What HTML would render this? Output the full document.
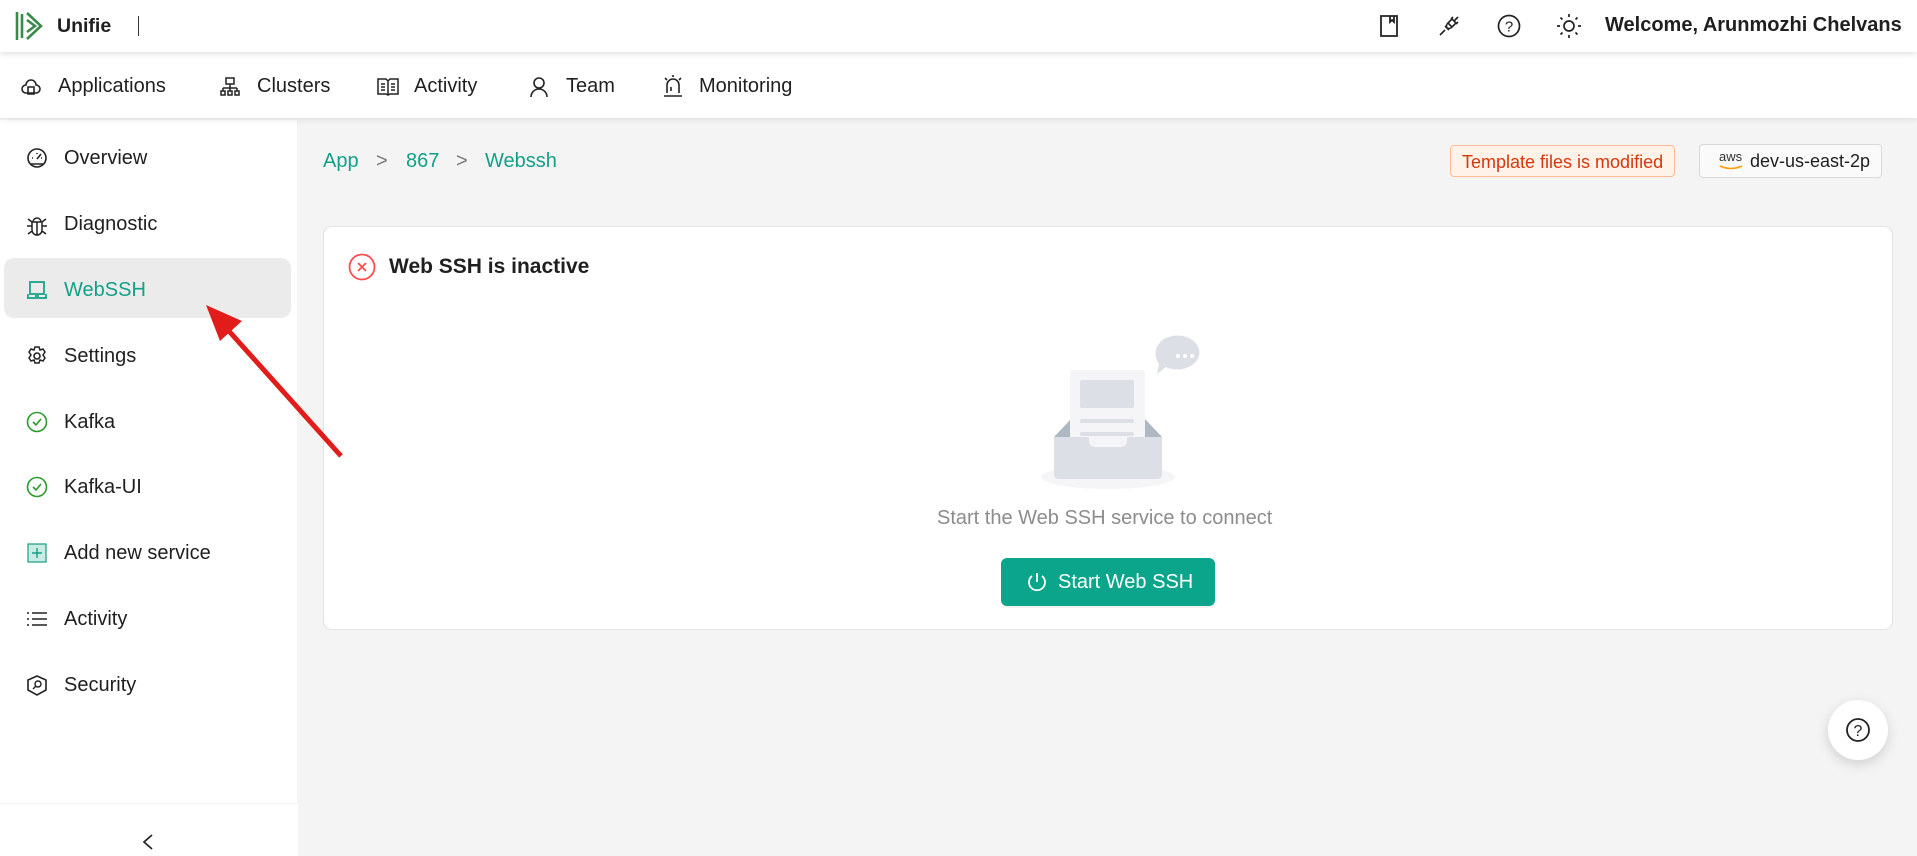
<!DOCTYPE html>
<html><head><meta charset="utf-8"><style>
*{box-sizing:border-box;margin:0;padding:0}
body{width:1917px;height:856px;overflow:hidden;background:#f4f4f4;font-family:"Liberation Sans",sans-serif;color:#1f1f1f;position:relative}
.abs{position:absolute}
.hdr{left:0;top:0;width:1917px;height:52px;background:#fff;box-shadow:0 2px 6px rgba(0,0,0,.12);z-index:3}
.nav{left:0;top:52px;width:1917px;height:66px;background:#fff;box-shadow:0 2px 6px rgba(0,0,0,.08);z-index:2}
.nav span{position:absolute;top:23px;font-size:20px}
.side{left:0;top:120px;width:297px;height:683px;background:#fff}
.item{position:absolute;left:0;width:297px;height:40px;font-size:20px}
.item .t{position:absolute;left:64px;top:9px}
.item svg{position:absolute;left:27px;top:10px}
.bc{top:150px;font-size:20px;color:#13a088}
.card{left:323px;top:226px;width:1570px;height:404px;background:#fff;border:1px solid #e3e3e3;border-radius:9px}
svg{overflow:visible}
</style></head><body>
<div class="abs hdr">
 <svg class="abs" style="left:15px;top:11px" width="30" height="30" viewBox="0 0 30 30"><g stroke="#3b8a4a" stroke-width="2.6" fill="none"><path d="M2 1v28M7 3v24M12 2l14 13-14 13M12 9l8 6-8 6"/></g></svg>
 <span class="abs" style="left:57px;top:15px;font-size:19.5px;font-weight:bold">Unifie</span>
 <div class="abs" style="left:138px;top:16px;width:1px;height:20px;background:#333"></div>
 <svg class="abs" style="left:1380px;top:15px" width="18" height="22"><path d="M1 1h16v20H1z M10 1v6l2-2 2 2V1" fill="none" stroke="#222" stroke-width="1.8"/></svg>
 <svg class="abs" style="left:1438px;top:15px" width="22" height="22"><path d="M2 20l5-5M7 11l4 4M10 8l4 4M9 13a4 4 0 0 0 5-1l4-4-4-4-4 4a4 4 0 0 0-1 5zM16 6l4-4M13 4l2-2M18 9l2-2" fill="none" stroke="#222" stroke-width="1.6"/></svg>
 <svg class="abs" style="left:1497px;top:14px" width="24" height="24"><circle cx="12" cy="12" r="10.5" fill="none" stroke="#222" stroke-width="1.7"/><text x="12" y="17.5" font-size="15" text-anchor="middle" font-family="Liberation Sans" fill="#222">?</text></svg>
 <svg class="abs" style="left:1557px;top:14px" width="24" height="24"><circle cx="12" cy="12" r="5" fill="none" stroke="#222" stroke-width="1.7"/><g stroke="#222" stroke-width="1.7"><path d="M12 0v3M12 21v3M0 12h3M21 12h3M3.5 3.5l2 2M18.5 18.5l2 2M3.5 20.5l2-2M18.5 5.5l2-2"/></g></svg>
 <span class="abs" style="left:1605px;top:14px;font-size:20px;font-weight:bold">Welcome, Arunmozhi Chelvans</span>
</div>
<div class="abs nav">
 <svg class="abs" style="left:22px;top:27px" width="18" height="16"><path d="M4 14a4 4 0 0 1 0-8 5 5 0 0 1 10 0 4 4 0 0 1 0 8z M6 8h6v7H6z" fill="none" stroke="#222" stroke-width="1.6"/></svg>
 <span style="left:58px">Applications</span>
 <svg class="abs" style="left:221px;top:25px" width="18" height="20"><path d="M5 1h8v6H5zM9 7v4M2 11h14M2 11v3M9 11v3M16 11v3M0 14h4v4H0zM7 14h4v4H7zM14 14h4v4h-4z" fill="none" stroke="#222" stroke-width="1.5"/></svg>
 <span style="left:257px">Clusters</span>
 <svg class="abs" style="left:377px;top:26px" width="22" height="18"><path d="M1 1h8l2 2 2-2h8v15h-8l-2 1-2-1H1zM11 3v14M4 6h4M4 9h4M4 12h4M14 6h4M14 9h4M14 12h4" fill="none" stroke="#222" stroke-width="1.5"/></svg>
 <span style="left:414px">Activity</span>
 <svg class="abs" style="left:530px;top:25px" width="18" height="20"><circle cx="9" cy="6" r="5" fill="none" stroke="#222" stroke-width="1.6"/><path d="M1 20a8 8 0 0 1 16 0" fill="none" stroke="#222" stroke-width="1.6"/></svg>
 <span style="left:566px">Team</span>
 <svg class="abs" style="left:663px;top:23px" width="20" height="22"><path d="M4 18v-8a6 6 0 0 1 12 0v8M1 21h18M10 0v2M2 3l2 2M18 3l-2 2M8 12v4" fill="none" stroke="#222" stroke-width="1.6"/></svg>
 <span style="left:699px">Monitoring</span>
</div>
<div class="abs side">
 <div class="item" style="top:18px"><svg width="20" height="20"><circle cx="10" cy="10" r="9" fill="none" stroke="#222" stroke-width="1.6"/><path d="M10 11l4-5M5 10h1M14 10h1M10 5v1M4 16h12" stroke="#222" stroke-width="1.6"/></svg><span class="t">Overview</span></div>
 <div class="item" style="top:84px"><svg width="20" height="22"><path d="M5 8h10v8a5 5 0 0 1-10 0zM6 8a4 4 0 0 1 8 0M10 8v13M0 12h5M15 12h5M1 5l4 3M19 5l-4 3M1 20l4-3M19 20l-4-3" fill="none" stroke="#222" stroke-width="1.5"/></svg><span class="t">Diagnostic</span></div>
 <div class="abs" style="left:4px;top:138px;width:287px;height:60px;background:#ebebeb;border-radius:10px"></div>
 <div class="item" style="top:150px;color:#13a088"><svg width="20" height="20"><path d="M3 2h14v12H3zM0 18h20M1 14v4M19 14v4M8 16h4" fill="none" stroke="#13a088" stroke-width="1.7"/></svg><span class="t">WebSSH</span></div>
 <div class="item" style="top:216px"><svg width="20" height="20"><circle cx="10" cy="10" r="3" fill="none" stroke="#222" stroke-width="1.6"/><path d="M8 1h4l1 3 3-1 2 3-2 3 2 3-2 3-3-1-1 3H8l-1-3-3 1-2-3 2-3-2-3 2-3 3 1z" fill="none" stroke="#222" stroke-width="1.5"/></svg><span class="t">Settings</span></div>
 <div class="item" style="top:282px"><svg width="20" height="20"><circle cx="10" cy="10" r="9.5" fill="none" stroke="#2a9a2a" stroke-width="1.6"/><path d="M6 10l3 3 5-6" fill="none" stroke="#2a9a2a" stroke-width="1.6"/></svg><span class="t">Kafka</span></div>
 <div class="item" style="top:347px"><svg width="20" height="20"><circle cx="10" cy="10" r="9.5" fill="none" stroke="#2a9a2a" stroke-width="1.6"/><path d="M6 10l3 3 5-6" fill="none" stroke="#2a9a2a" stroke-width="1.6"/></svg><span class="t">Kafka-UI</span></div>
 <div class="item" style="top:413px"><svg width="20" height="20"><rect x="1" y="1" width="18" height="18" fill="#c7ece4" stroke="#2aa38b" stroke-width="1.3"/><path d="M10 5v10M5 10h10" stroke="#13a088" stroke-width="1.4"/></svg><span class="t">Add new service</span></div>
 <div class="item" style="top:479px"><svg width="20" height="20"><path d="M0 4h2M0 10h2M0 16h2M5 4h15M5 10h15M5 16h15" stroke="#222" stroke-width="1.6"/></svg><span class="t">Activity</span></div>
 <div class="item" style="top:545px"><svg width="20" height="22"><path d="M10 1l9 4v10l-9 5-9-5V5z" fill="none" stroke="#222" stroke-width="1.6"/><circle cx="11" cy="9" r="3" fill="none" stroke="#222" stroke-width="1.4"/><path d="M9 11l-3 3" stroke="#222" stroke-width="1.4"/></svg><span class="t">Security</span></div>
</div>
<div class="abs" style="left:0;top:804px;width:298px;height:52px;background:#fff"></div>
<svg class="abs" style="left:142px;top:834px" width="12" height="16"><path d="M10 1L2 8l8 7" fill="none" stroke="#222" stroke-width="1.7"/></svg>
<div class="abs bc" style="left:323px">App</div>
<div class="abs bc" style="left:376px;color:#777">&gt;</div>
<div class="abs bc" style="left:406px">867</div>
<div class="abs bc" style="left:456px;color:#777">&gt;</div>
<div class="abs bc" style="left:485px">Webssh</div>
<div class="abs" style="left:1450px;top:145px;width:225px;height:32px;background:#fff2e8;border:1px solid #ffbb96;border-radius:4px;color:#d4380d;font-size:18px;padding:6px 0 0 11px;white-space:nowrap">Template files is modified</div>
<div class="abs" style="left:1699px;top:144px;width:183px;height:34px;background:#fafafa;border:1px solid #d9d9d9;border-radius:4px;font-size:18px;padding:6px 0 0 50px;white-space:nowrap">dev-us-east-2p</div>
<span class="abs" style="left:1719px;top:149px;font-size:13px;color:#333">aws</span>
<svg class="abs" style="left:1719px;top:165px" width="24" height="6"><path d="M1 1q11 5 22 0" fill="none" stroke="#f90" stroke-width="1.6"/></svg>
<div class="abs card"></div>
<svg class="abs" style="left:348px;top:253px" width="28" height="28"><circle cx="14" cy="14" r="12.5" fill="none" stroke="#ff4d4f" stroke-width="1.8"/><path d="M10 10l8 8M18 10l-8 8" stroke="#ff4d4f" stroke-width="1.8"/></svg>
<span class="abs" style="left:389px;top:255px;font-size:21px;font-weight:bold">Web SSH is inactive</span>
<svg class="abs" style="left:1030px;top:330px" width="180" height="170">
 <ellipse cx="78" cy="147" rx="67" ry="12" fill="#f5f5f7"/>
 <path d="M24 107l17-18h74l17 18z" fill="#aeb8c2"/>
 <rect x="40" y="40" width="75" height="95" rx="3" fill="#f5f5f7"/>
 <rect x="50" y="50" width="54" height="28" rx="2" fill="#dce0e6"/>
 <rect x="50" y="89" width="54" height="4" rx="2" fill="#dce0e6"/>
 <rect x="50" y="102" width="54" height="4" rx="2" fill="#dce0e6"/>
 <path d="M24 107h35v4a6 6 0 0 0 6 6h26a6 6 0 0 0 6-6v-4h35v38a4 4 0 0 1-4 4H28a4 4 0 0 1-4-4z" fill="#dce0e6"/>
 <path d="M134 9a22 17 0 1 1 2 28l-9 7 2-10a17 17 0 0 1 5-25z" fill="#dce0e6"/>
 <circle cx="148" cy="26" r="2" fill="#fff"/><circle cx="155" cy="26" r="2" fill="#fff"/><circle cx="162" cy="26" r="2" fill="#fff"/>
</svg>
<span class="abs" style="left:937px;top:507px;font-size:20px;color:#8c8c8c">Start the Web SSH service to connect</span>
<div class="abs" style="left:1001px;top:558px;width:214px;height:48px;background:#0aa58a;border-radius:6px;box-shadow:0 2px 0 rgba(0,0,0,.05)"></div>
<svg class="abs" style="left:1026px;top:572px" width="22" height="22"><path d="M6 4a8 8 0 1 0 10 0M11 1v9" fill="none" stroke="#fff" stroke-width="1.8"/></svg>
<span class="abs" style="left:1058px;top:571px;font-size:20px;color:#fff">Start Web SSH</span>
<div class="abs" style="left:1828px;top:700px;width:60px;height:60px;border-radius:50%;background:#fff;box-shadow:0 4px 12px rgba(0,0,0,.15)"></div>
<svg class="abs" style="left:1846px;top:718px" width="24" height="24"><circle cx="12" cy="12" r="11" fill="none" stroke="#222" stroke-width="1.8"/><text x="12" y="18" font-size="16" text-anchor="middle" font-family="Liberation Sans" fill="#222">?</text></svg>
<svg class="abs" style="left:0;top:0;z-index:5" width="1917" height="856"><path d="M341 456L228 330" stroke="#e21b1b" stroke-width="5"/><path d="M206 305l36 16-22 20z" fill="#e21b1b"/></svg>
</body></html>
